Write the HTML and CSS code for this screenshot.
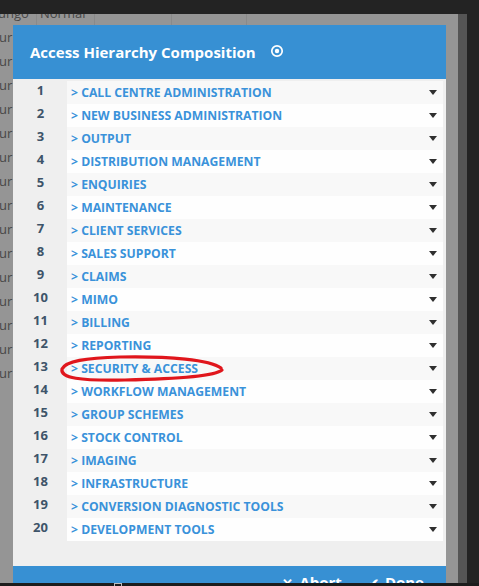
FILE: index.html
```html
<!DOCTYPE html>
<html>
<head>
<meta charset="utf-8">
<link rel="stylesheet" href="styles.css">
</head>
<body>
<div class="screen">
  <div class="topbar"></div>
  <div class="stage">
    <div class="backdrop">
      <div class="bg-head"><span class="c1">ungo</span><span class="c2">Normal</span><span class="c3"></span><span class="c4"></span></div>
      <div class="bg-row">ur</div><div class="bg-row">ur</div><div class="bg-row">ur</div><div class="bg-row">ur</div>
      <div class="bg-row">ur</div><div class="bg-row">ur</div><div class="bg-row">ur</div><div class="bg-row">ur</div>
      <div class="bg-row">ur</div><div class="bg-row">ur</div><div class="bg-row">ur</div><div class="bg-row">ur</div>
      <div class="bg-row">ur</div><div class="bg-row">ur</div><div class="bg-row">ur</div>
    </div>

    <div class="modal">
      <div class="modal-header">
        <span class="modal-title">Access Hierarchy Composition</span>
        <svg class="title-icon" width="14" height="14" viewBox="0 0 14 14"><circle cx="7" cy="7" r="5.2" fill="none" stroke="#fff" stroke-width="1.7"/><circle cx="7" cy="7" r="2.2" fill="#fff"/></svg>
      </div>
      <div class="modal-body">
        <ol class="list">
          <li class="item"><span class="num">1</span><span class="row"><span class="label">&gt; CALL CENTRE ADMINISTRATION</span><span class="caret"></span></span></li>
          <li class="item"><span class="num">2</span><span class="row"><span class="label">&gt; NEW BUSINESS ADMINISTRATION</span><span class="caret"></span></span></li>
          <li class="item"><span class="num">3</span><span class="row"><span class="label">&gt; OUTPUT</span><span class="caret"></span></span></li>
          <li class="item"><span class="num">4</span><span class="row"><span class="label">&gt; DISTRIBUTION MANAGEMENT</span><span class="caret"></span></span></li>
          <li class="item"><span class="num">5</span><span class="row"><span class="label">&gt; ENQUIRIES</span><span class="caret"></span></span></li>
          <li class="item"><span class="num">6</span><span class="row"><span class="label">&gt; MAINTENANCE</span><span class="caret"></span></span></li>
          <li class="item"><span class="num">7</span><span class="row"><span class="label">&gt; CLIENT SERVICES</span><span class="caret"></span></span></li>
          <li class="item"><span class="num">8</span><span class="row"><span class="label">&gt; SALES SUPPORT</span><span class="caret"></span></span></li>
          <li class="item"><span class="num">9</span><span class="row"><span class="label">&gt; CLAIMS</span><span class="caret"></span></span></li>
          <li class="item"><span class="num">10</span><span class="row"><span class="label">&gt; MIMO</span><span class="caret"></span></span></li>
          <li class="item"><span class="num">11</span><span class="row"><span class="label">&gt; BILLING</span><span class="caret"></span></span></li>
          <li class="item"><span class="num">12</span><span class="row"><span class="label">&gt; REPORTING</span><span class="caret"></span></span></li>
          <li class="item"><span class="num">13</span><span class="row"><span class="label">&gt; SECURITY &amp; ACCESS</span><span class="caret"></span></span></li>
          <li class="item"><span class="num">14</span><span class="row"><span class="label">&gt; WORKFLOW MANAGEMENT</span><span class="caret"></span></span></li>
          <li class="item"><span class="num">15</span><span class="row"><span class="label">&gt; GROUP SCHEMES</span><span class="caret"></span></span></li>
          <li class="item"><span class="num">16</span><span class="row"><span class="label">&gt; STOCK CONTROL</span><span class="caret"></span></span></li>
          <li class="item"><span class="num">17</span><span class="row"><span class="label">&gt; IMAGING</span><span class="caret"></span></span></li>
          <li class="item"><span class="num">18</span><span class="row"><span class="label">&gt; INFRASTRUCTURE</span><span class="caret"></span></span></li>
          <li class="item"><span class="num">19</span><span class="row"><span class="label">&gt; CONVERSION DIAGNOSTIC TOOLS</span><span class="caret"></span></span></li>
          <li class="item"><span class="num">20</span><span class="row"><span class="label">&gt; DEVELOPMENT TOOLS</span><span class="caret"></span></span></li>
        </ol>
      </div>
      <div class="modal-footer">
        <span class="btn"><span class="btn-icon">&#10005;</span>Abort</span>
        <span class="btn"><span class="btn-icon">&#10004;</span>Done</span>
      </div>
    </div>

    <svg class="annotation" width="479" height="586" viewBox="0 0 479 586">
      <path d="M221 368 C 210 360, 170 356, 120 357 C 85 358, 66 361, 62 369 C 60 378, 80 381, 125 380 C 175 379, 215 376, 222 370" fill="none" stroke="#e0161c" stroke-width="3.2" stroke-linecap="round"/>
    </svg>
  </div>
  <div class="strip-mid"></div>
  <div class="strip-right"></div>
  <div class="bottombar"><span class="tick"></span></div>
</div>
</body>
</html>
```
FILE: styles.css
```css
* { box-sizing: border-box; }
html, body { margin: 0; padding: 0; }
body {
  width: 479px;
  height: 586px;
  overflow: hidden;
  background: #232323;
  font-family: "Open Sans", "Liberation Sans", sans-serif;
}
.screen {
  display: grid;
  grid-template-columns: 458px 9px 12px;
  grid-template-rows: 14px 569px 3px;
  width: 479px;
  height: 586px;
}
.topbar { grid-column: 1 / 4; grid-row: 1; background: #232323; }
.stage {
  grid-column: 1; grid-row: 2;
  position: relative;
  background: #959595;
  overflow: hidden;
}
.strip-mid { grid-column: 2; grid-row: 2; background: #555555; }
.strip-right { grid-column: 3; grid-row: 2; background: #232323; }
.bottombar { grid-column: 1 / 4; grid-row: 3; background: #1c1c1c; position: relative; }
.tick { position: absolute; left: 114px; top: 0; width: 8px; height: 3px; border-left: 1px solid #bbb; border-right: 1px solid #bbb; border-top: 1px solid #bbb; }

/* backdrop table */
.backdrop {
  color: #474747;
  font-size: 13px;
  margin-top: -13px;
}
.bg-head {
  display: flex;
  height: 24px;
  line-height: 24px;
  white-space: nowrap;
}
.bg-head span { display: block; height: 24px; border-right: 1px solid #8a8a8a; }
.bg-head .c1 { width: 37px; text-indent: -2px; }
.bg-head .c2 { width: 58px; padding-left: 3px; }
.bg-head .c3 { width: 77px; }
.bg-head .c4 { width: 75px; }
.bg-row {
  height: 24px;
  line-height: 24px;
  text-indent: -1px;
}

/* modal */
.modal {
  position: absolute;
  left: 13px;
  top: 11px;
  width: 433px;
  background: #efefef;
}
.modal-header {
  height: 54px;
  background: #3790d3;
  display: flex;
  align-items: center;
  padding: 0 0 0 17px;
  gap: 14px;
}
.modal-title {
  color: #fff;
  font-weight: 700;
  font-size: 15px;
}
.title-icon { position: relative; top: -1px; }
.modal-body { padding: 2px 3px 25px 0; }
.list { list-style: none; margin: 0; padding: 0; }
.item { display: flex; height: 23px; }
.num {
  width: 54px;
  text-align: center;
  font-size: 13px;
  font-weight: 700;
  color: #3e5469;
  line-height: 19px;
  padding-left: 1px;
}
.row {
  flex: 1;
  display: flex;
  align-items: center;
  justify-content: space-between;
  padding: 0 6px 0 4px;
  background: #f8f8f8;
}
.item:nth-child(even) .row { background: #fefefe; }
.label {
  color: #3a92da;
  font-weight: 700;
  font-size: 12.2px;
  line-height: 23px;
}
.caret {
  width: 0; height: 0;
  border-left: 4.5px solid transparent;
  border-right: 4.5px solid transparent;
  border-top: 5px solid #2f2f2f;
}
.modal-footer {
  height: 40px;
  background: #3790d3;
  display: flex;
  justify-content: flex-end;
  gap: 26px;
  padding: 6px 22px 0 0;
  color: #fff;
  font-weight: 700;
  font-size: 15px;
  line-height: 20px;
}
.btn-icon { margin-right: 6px; font-size: 13px; }

.annotation { position: absolute; left: 0; top: -14px; pointer-events: none; }
```
